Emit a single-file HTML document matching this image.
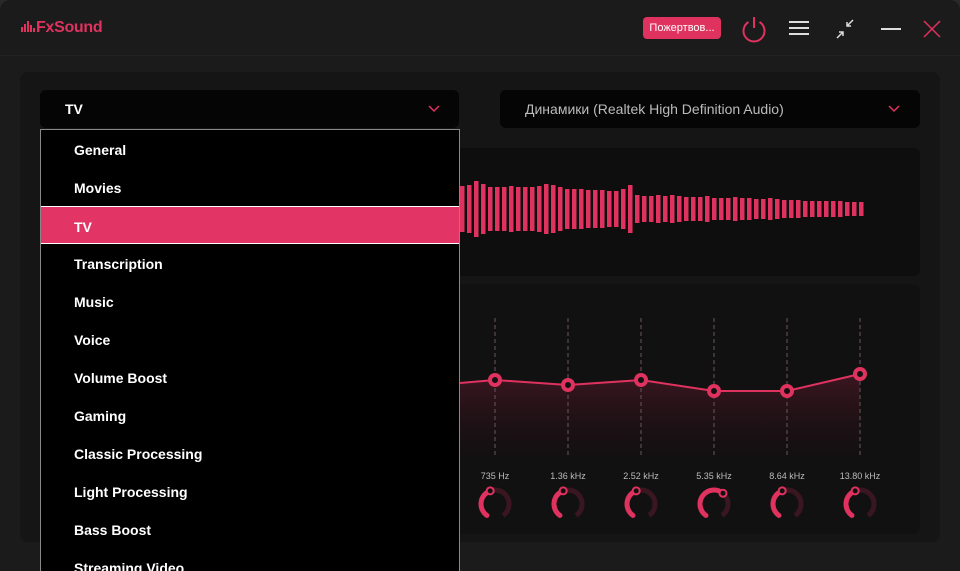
<!DOCTYPE html>
<html><head><meta charset="utf-8"><style>
*{margin:0;padding:0;box-sizing:border-box}
body{width:960px;height:571px;background:#2a2a28;overflow:hidden;font-family:"Liberation Sans","DejaVu Sans",sans-serif}
.win{position:absolute;left:0;top:0;width:960px;height:571px;background:#1b1b1b;border-radius:10px 10px 0 0;overflow:hidden}
.title{position:absolute;left:0;top:0;width:960px;height:56px;border-bottom:1px solid #222}
.logo{position:absolute;left:20px;top:19px;color:#e0325f;font-size:16px;font-weight:bold;letter-spacing:-0.3px}
.donate{position:absolute;left:643px;top:17px;width:78px;height:22px;background:#e0325f;border-radius:4px;color:#fff;font-size:11px;text-align:center;line-height:22px}
.panel{position:absolute;left:20px;top:72px;width:920px;height:470px;background:#151515;border-radius:8px}
.dd{position:absolute;top:90px;height:38px;background:#050505;border-radius:6px;color:#fff;font-size:14px;font-weight:bold;line-height:38px}
.wave{position:absolute;left:420px;top:148px;width:500px;height:128px;background:#0e0e0f;border-radius:6px}
.eq{position:absolute;left:420px;top:284px;width:500px;height:250px;background:#111112;border-radius:8px}
.list{position:absolute;left:40px;top:129px;width:420px;height:450px;background:#000;border:1px solid #888}
.item{height:38px;line-height:40px;padding-left:33px;color:#fff;font-size:14px;font-weight:bold}
.sel{background:#e23565;border-top:1px solid #fff;border-bottom:1px solid #fff}
.lab{position:absolute;top:471px;width:60px;text-align:center;color:#bbb;font-size:9px}
</style></head><body>
<div class="win">
<div class="title">
 <div class="logo"><svg width="16" height="14" style="vertical-align:-1px"><g fill="#e0325f"><rect x="1" y="8" width="2" height="5"/><rect x="4" y="5" width="2" height="8"/><rect x="7" y="2" width="2" height="11"/><rect x="10" y="6" width="2" height="7"/><rect x="13" y="9" width="2" height="4"/></g></svg>FxSound</div>
 <div class="donate">Пожертвов...</div>
 <svg style="position:absolute;left:739px;top:14px" width="30" height="30"><path d="M9.5 8 A10.5 10.5 0 1 0 20.5 8" fill="none" stroke="#e0325f" stroke-width="2"/><line x1="15" y1="3" x2="15" y2="14" stroke="#e0325f" stroke-width="2"/></svg>
 <svg style="position:absolute;left:788px;top:19px" width="22" height="18"><g stroke="#ddd" stroke-width="2"><line x1="1" y1="3" x2="21" y2="3"/><line x1="1" y1="9" x2="21" y2="9"/><line x1="1" y1="15" x2="21" y2="15"/></g></svg>
 <svg style="position:absolute;left:833px;top:17px" width="24" height="24"><g stroke="#ddd" stroke-width="1.5" fill="none"><path d="M20 3 L14 9 M14 5 L14 9 L18 9"/><path d="M4 21 L10 15 M6 15 L10 15 L10 19"/></g></svg>
 <svg style="position:absolute;left:880px;top:27px" width="22" height="4"><line x1="1" y1="2" x2="21" y2="2" stroke="#ddd" stroke-width="2"/></svg>
 <svg style="position:absolute;left:923px;top:20px" width="18" height="18"><path d="M1 1 L17 17 M17 1 L1 17" stroke="#e0325f" stroke-width="1.5"/></svg>
</div>
<div class="panel"></div>
<div class="dd" style="left:40px;width:419px;padding-left:25px">TV<svg style="position:absolute;left:388px;top:15px" width="12" height="8"><path d="M1 1 L6 6 L11 1" stroke="#e0325f" stroke-width="1.5" fill="none"/></svg></div>
<div class="dd" style="left:500px;width:420px;padding-left:25px;color:#bbb;font-weight:normal">Динамики (Realtek High Definition Audio)<svg style="position:absolute;left:388px;top:15px" width="12" height="8"><path d="M1 1 L6 6 L11 1" stroke="#e0325f" stroke-width="1.5" fill="none"/></svg></div>
<div class="wave"></div>
<div class="eq"></div>
<svg style="position:absolute;left:0;top:0" width="960" height="571" id="s">
<defs><linearGradient id="g" x1="0" y1="0" x2="0" y2="1"><stop offset="0" stop-color="#5a1a2a" stop-opacity="0.6"/><stop offset="1" stop-color="#2a0c14" stop-opacity="0.1"/></linearGradient></defs>
<g id="bars" fill="#e0325f"></g>
<polygon points="460,383 495,380 568,385 641,380 714,391 787,391 860,374 860,455 460,455" fill="url(#g)"/>
<g stroke="#6a5560" stroke-width="1" stroke-dasharray="4,3">
<line x1="495" y1="318" x2="495" y2="455"/><line x1="568" y1="318" x2="568" y2="455"/><line x1="641" y1="318" x2="641" y2="455"/><line x1="714" y1="318" x2="714" y2="455"/><line x1="787" y1="318" x2="787" y2="455"/><line x1="860" y1="318" x2="860" y2="455"/></g>
<polyline points="460,383 495,380 568,385 641,380 714,391 787,391 860,374" fill="none" stroke="#e0325f" stroke-width="2"/>
<g fill="#111" stroke="#e0325f" stroke-width="4">
<circle cx="495" cy="380" r="5"/><circle cx="568" cy="385" r="5"/><circle cx="641" cy="380" r="5"/><circle cx="714" cy="391" r="5"/><circle cx="787" cy="391" r="5"/><circle cx="860" cy="374" r="5"/></g>
<g id="knobs"></g>
</svg>
<div class="lab" style="left:465px">735 Hz</div><div class="lab" style="left:538px">1.36 kHz</div><div class="lab" style="left:611px">2.52 kHz</div><div class="lab" style="left:684px">5.35 kHz</div><div class="lab" style="left:757px">8.64 kHz</div><div class="lab" style="left:830px">13.80 kHz</div>
<div class="list">
<div class="item">General</div><div class="item">Movies</div><div class="item sel">TV</div><div class="item">Transcription</div><div class="item">Music</div><div class="item">Voice</div><div class="item">Volume Boost</div><div class="item">Gaming</div><div class="item">Classic Processing</div><div class="item">Light Processing</div><div class="item">Bass Boost</div><div class="item">Streaming Video</div>
</div>
</div>
<script>
var h=[23,24,28,25,22,22,22,23,22,22,22,23,25,24,22,20,20,20,19,19,19,18,18,20,24,14,13,13,14,13,14,13,12,12,12,13,11,11,11,12,11,11,10,10,11,10,9,9,9,8,8,8,8,8,8,7,7,7];
var s='';for(var i=0;i<h.length;i++){s+='<rect x="'+(460+7*i)+'" y="'+(209-h[i])+'" width="4.5" height="'+(2*h[i])+'"/>';}
document.getElementById('bars').innerHTML=s;
var xs=[495,568,641,714,787,860],ang=[-20,-20,-20,40,-20,-20],k='';
function pt(cx,cy,r,a){var t=(a-90)*Math.PI/180;return [cx+r*Math.cos(t),cy+r*Math.sin(t)];}
for(var j=0;j<6;j++){var cx=xs[j],cy=504,r=14;var a0=-145,a1=145,av=ang[j];
var p0=pt(cx,cy,r,a0),p1=pt(cx,cy,r,a1),pv=pt(cx,cy,r,av);
k+='<path d="M'+p0+' A14 14 0 1 1 '+p1+'" fill="none" stroke="#3a1620" stroke-width="5"/>';
k+='<path d="M'+p0+' A14 14 0 '+((av-a0)>180?1:0)+' 1 '+pv+'" fill="none" stroke="#e0325f" stroke-width="5" stroke-linecap="round"/>';
k+='<circle cx="'+pv[0]+'" cy="'+pv[1]+'" r="3.5" fill="#111" stroke="#e0325f" stroke-width="2"/>';}
document.getElementById('knobs').innerHTML=k;
</script>
</body></html>
